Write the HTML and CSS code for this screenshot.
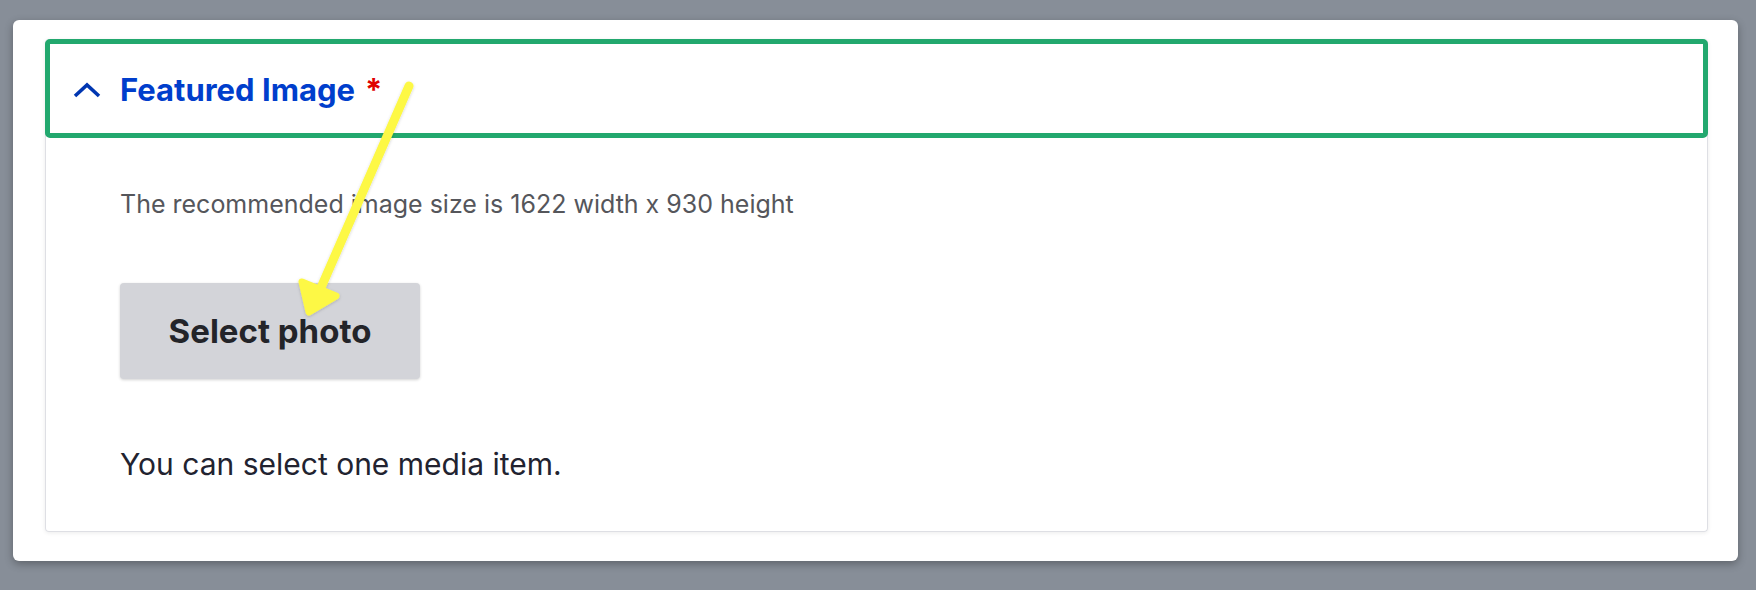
FILE: index.html
```html
<!DOCTYPE html>
<html lang="en">
<head>
<meta charset="utf-8">
<title>Featured Image</title>
<link rel="stylesheet" href="styles.css">
</head>
<body>
<div class="card">
  <div class="panel">
    <div class="summary">
      <svg class="chevron" width="28" height="16" viewBox="0 0 28 16" aria-hidden="true">
        <polyline points="2,14 14,3 26,14" fill="none" stroke="#0036b1" stroke-width="3.6"/>
      </svg>
      <span class="title">Featured Image<span class="req">*</span></span>
    </div>
    <div class="body">
      <p class="desc">The recommended image size is 1622 width x 930 height</p>
      <button class="btn" type="button">Select photo</button>
      <p class="note">You can select one media item.</p>
    </div>
  </div>
  <svg class="arrow" width="1756" height="590" viewBox="0 0 1756 590" aria-hidden="true">
    <defs>
      <filter id="sh" x="-20%" y="-20%" width="140%" height="140%">
        <feDropShadow dx="0" dy="1" stdDeviation="1.5" flood-color="#000" flood-opacity="0.18"/>
      </filter>
    </defs>
    <g filter="url(#sh)" fill="#fdf845" stroke="#fdf845" stroke-linecap="round" stroke-linejoin="round">
      <line x1="409" y1="86" x2="320" y2="290" stroke-width="9"/>
      <polygon points="302,282 336,296 309,312" stroke-width="7"/>
    </g>
  </svg>
</div>
</body>
</html>
```

FILE: styles.css
```css
html, body {
  margin: 0;
  padding: 0;
}
body {
  background: #878e98;
  padding: 20px 18px 29px 13px;
  font-family: Inter, "Noto Sans", sans-serif;
  color: #222330;
}
.card {
  position: relative;
  background: #fff;
  border-radius: 6px;
  padding: 19px 30px 29px 32px;
  box-shadow: 0 3px 8px rgba(0, 0, 0, 0.3);
}
.panel {
  border: 1px solid #dedfe4;
  border-top: none;
  border-radius: 4px;
  box-shadow: 0 1px 4px rgba(0, 0, 0, 0.08);
}
.summary {
  display: flex;
  align-items: center;
  height: 89px;
  margin: 0 -1px;
  border: 5px solid #22a86e;
  border-radius: 5px;
  padding-left: 23px;
}
.chevron {
  display: block;
  margin-right: 19px;
  margin-top: 2px;
}
.title {
  font-weight: 700;
  font-size: 31px;
  line-height: 38px;
  margin-top: 3px;
  color: #003ecc;
}
.req {
  color: #e00000;
  font-weight: 700;
  margin-left: 10px;
}
.body {
  padding: 50px 40px 49px 74px;
  display: flex;
  flex-direction: column;
  align-items: flex-start;
}
.desc {
  margin: 0;
  font-size: 25px;
  line-height: 32px;
  color: #55565b;
}
.btn {
  margin-top: 63px;
  width: 300px;
  height: 96px;
  border: none;
  border-radius: 4px;
  background: #d3d4d9;
  font-family: Inter, "Noto Sans", sans-serif;
  font-weight: 700;
  font-size: 33px;
  color: #232429;
  box-shadow: 0 1px 3px rgba(0, 0, 0, 0.18);
}
.note {
  margin: 67px 0 0;
  font-size: 30px;
  line-height: 36px;
  color: #222330;
}
.arrow {
  position: absolute;
  left: -13px;
  top: -20px;
  pointer-events: none;
}
```
